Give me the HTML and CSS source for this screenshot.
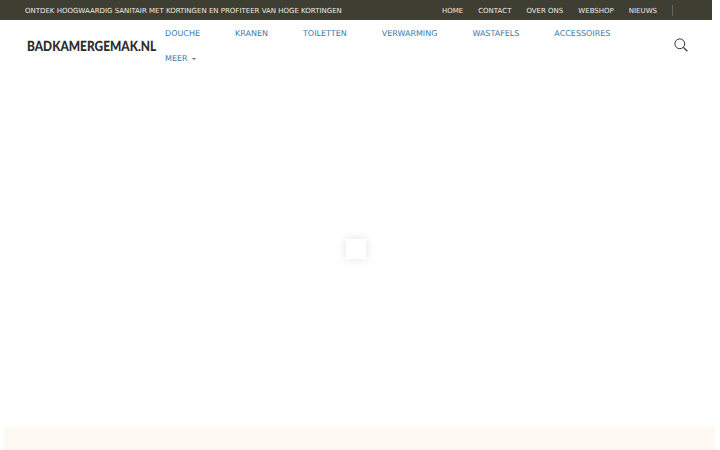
FILE: index.html
```html
<!DOCTYPE html>
<html lang="nl">
<head>
<meta charset="utf-8">
<title>Badkamergemak.nl</title>
<link rel="stylesheet" href="styles.css">
</head>
<body>
<div class="page">
  <div class="topbar">
    <span class="promo">ONTDEK HOOGWAARDIG SANITAIR MET KORTINGEN EN PROFITEER VAN HOGE KORTINGEN</span>
    <nav class="toplinks">
      <a>HOME</a><a>CONTACT</a><a>OVER ONS</a><a>WEBSHOP</a><a>NIEUWS</a><span class="sep"></span>
    </nav>
  </div>
  <header class="header">
    <div class="logo"><span class="logotext">BADKAMERGEMAK.NL</span></div>
    <nav class="mainnav">
      <a>DOUCHE</a><a>KRANEN</a><a>TOILETTEN</a><a>VERWARMING</a><a>WASTAFELS</a><a>ACCESSOIRES</a>
      <a>MEER <span class="caret"></span></a>
    </nav>
    <svg class="search" width="14" height="14" viewBox="0 0 14 14" fill="none" stroke="#333" stroke-width="1">
      <circle cx="5.8" cy="5.8" r="4.9"/>
      <path d="M9.4 9.4L13.3 13.3" stroke-width="1.3"/>
    </svg>
  </header>
  <main class="content"><div class="loader"></div></main>
</div>
<div class="band"></div>
</body>
</html>
```
FILE: styles.css
```css
html, body { margin: 0; padding: 0; background: #fff; }
body { height: 450px; overflow: hidden; font-family: "DejaVu Sans", sans-serif; text-rendering: geometricPrecision; display: flex; flex-direction: column; }
.page { width: 712px; flex: 1; display: flex; flex-direction: column; }
.topbar {
  box-sizing: border-box; height: 20px; background: #3f3e32; color: #ecece6; font-size: 7px;
  display: flex; align-items: center; justify-content: space-between; padding: 1px 39px 0 25px;
}
.toplinks { display: flex; align-items: center; gap: 15px; }
.sep { width: 1px; height: 11px; background: #66665a; }
.header { display: flex; align-items: flex-start; padding: 0 24px 0 27px; }
.logo { width: 138px; margin-top: 18px; font-family: "Lato", sans-serif; font-weight: 900; font-size: 14px; line-height: 16px; color: #2b2b2b; white-space: nowrap; }
.logotext { display: inline-block; transform: scaleX(.85); transform-origin: left center; }
.mainnav { flex: 1; max-width: 480px; display: flex; flex-wrap: wrap; column-gap: 35px; row-gap: 14px; padding-top: 8px; font-size: 8px; line-height: 11px; color: #3a7bad; }
.mainnav a { display: block; }
.caret { display: inline-block; width: 0; height: 0; margin-left: 2px; vertical-align: middle; border-top: 2px solid #3a7bad; border-left: 2px solid transparent; border-right: 2px solid transparent; }
.search { margin-top: 18px; margin-left: auto; }
.content { flex: 1; position: relative; }
.loader { position: absolute; left: 346px; top: 175px; width: 20px; height: 20px; background: #fff; box-shadow: 0 0 10px rgba(0,0,0,.12); }
.band { height: 23px; margin: 0 5px 0 4px; background: #fff9f3; }
```
